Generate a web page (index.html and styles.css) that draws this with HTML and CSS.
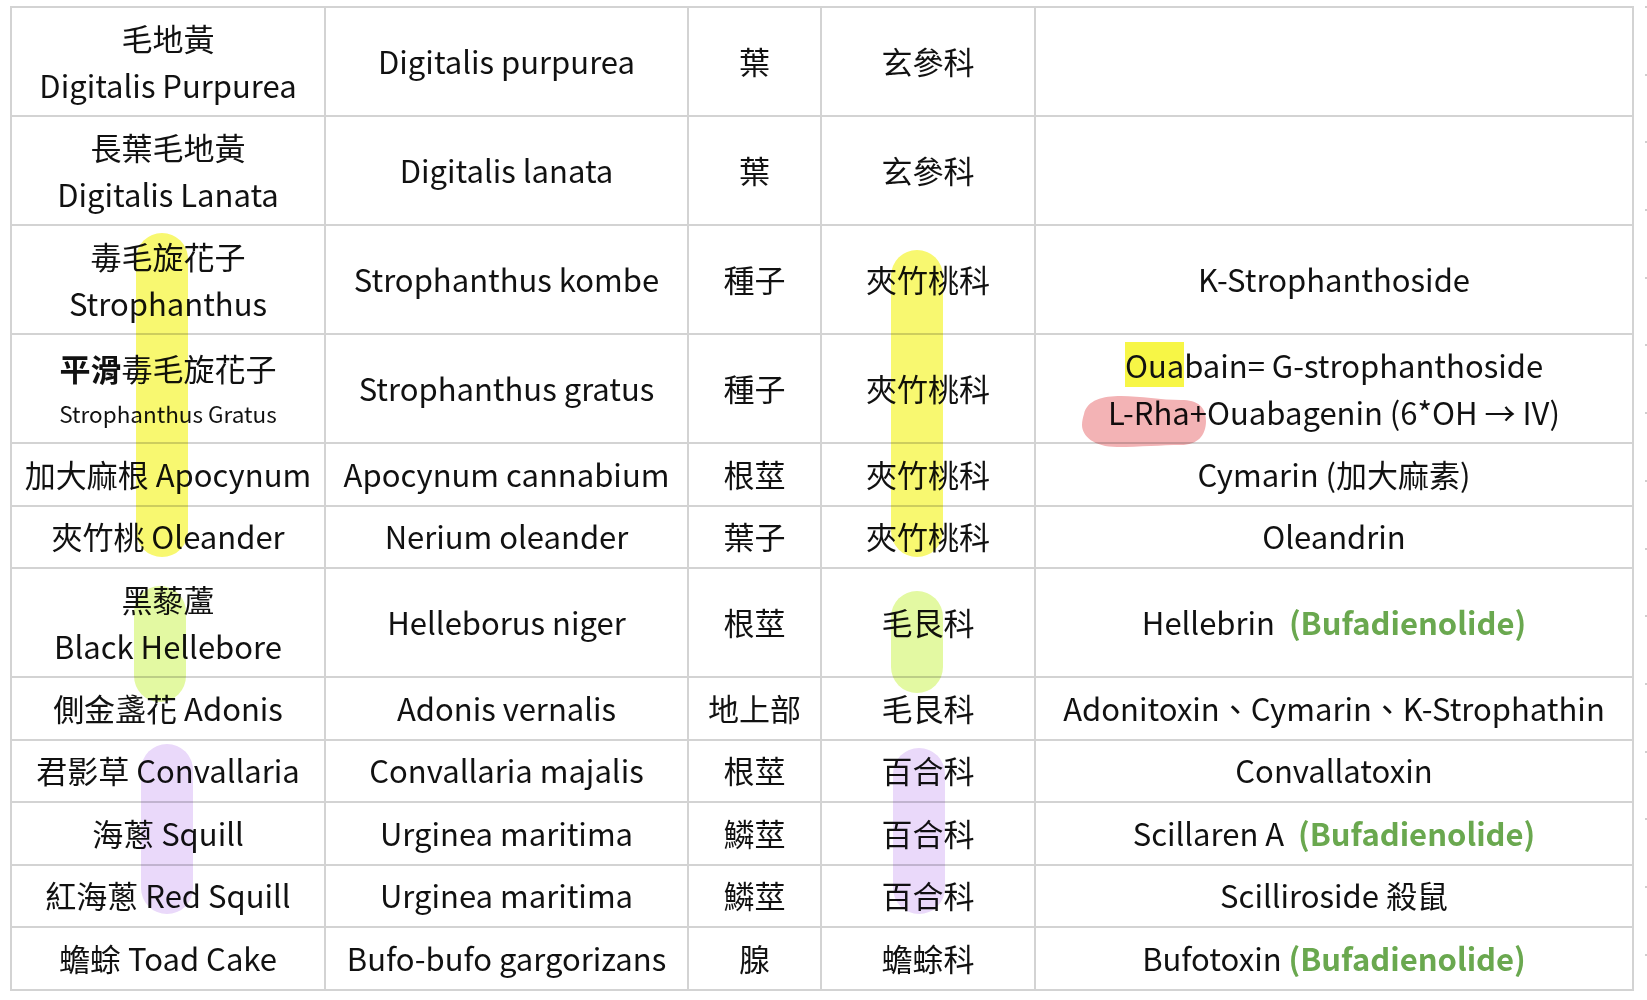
FILE: index.html
```html
<!DOCTYPE html>
<html lang="zh-Hant">
<head>
<meta charset="utf-8">
<link rel="stylesheet" href="styles.css">
</head>
<body>
<div class="page">
  <div class="sheet">
    <table class="grid">
      <colgroup>
        <col class="c1"><col class="c2"><col class="c3"><col class="c4"><col class="c5">
      </colgroup>
      <tr class="tall"><td>毛地黃<br>Digitalis Purpurea</td><td>Digitalis purpurea</td><td>葉</td><td>玄參科</td><td></td></tr>
      <tr class="tall"><td>長葉毛地黃<br>Digitalis Lanata</td><td>Digitalis lanata</td><td>葉</td><td>玄參科</td><td></td></tr>
      <tr class="tall"><td>毒毛旋花子<br>Strophanthus</td><td>Strophanthus kombe</td><td>種子</td><td>夾竹桃科</td><td>K-Strophanthoside</td></tr>
      <tr class="tall"><td class="tight"><b>平滑</b>毒毛旋花子<br><span class="small">Strophanthus Gratus</span></td><td>Strophanthus gratus</td><td>種子</td><td>夾竹桃科</td><td><span class="hl">Oua</span>bain= G-strophanthoside<br>L-Rha+Ouabagenin (6*OH → IV)</td></tr>
      <tr class="short"><td>加大麻根 Apocynum</td><td>Apocynum cannabium</td><td>根莖</td><td>夾竹桃科</td><td>Cymarin (加大麻素)</td></tr>
      <tr class="short"><td>夾竹桃 Oleander</td><td>Nerium oleander</td><td>葉子</td><td>夾竹桃科</td><td>Oleandrin</td></tr>
      <tr class="tall"><td>黑藜蘆<br>Black Hellebore</td><td>Helleborus niger</td><td>根莖</td><td>毛艮科</td><td>Hellebrin&nbsp; <span class="bufa">(Bufadienolide)</span></td></tr>
      <tr class="short"><td>側金盞花 Adonis</td><td>Adonis vernalis</td><td>地上部</td><td>毛艮科</td><td>Adonitoxin、Cymarin、K-Strophathin</td></tr>
      <tr class="short"><td>君影草 Convallaria</td><td>Convallaria majalis</td><td>根莖</td><td>百合科</td><td>Convallatoxin</td></tr>
      <tr class="short"><td>海蔥 Squill</td><td>Urginea maritima</td><td>鱗莖</td><td>百合科</td><td>Scillaren A&nbsp; <span class="bufa">(Bufadienolide)</span></td></tr>
      <tr class="short"><td>紅海蔥 Red Squill</td><td>Urginea maritima</td><td>鱗莖</td><td>百合科</td><td>Scilliroside 殺鼠</td></tr>
      <tr class="short"><td>蟾蜍 Toad Cake</td><td>Bufo-bufo gargorizans</td><td>腺</td><td>蟾蜍科</td><td>Bufotoxin <span class="bufa">(Bufadienolide)</span></td></tr>
    </table>
    <div class="marker m-yellow m-a"></div>
    <div class="marker m-yellow m-b"></div>
    <div class="marker m-green m-c"></div>
    <div class="marker m-green m-d"></div>
    <div class="marker m-purple m-e"></div>
    <div class="marker m-purple m-f"></div>
    <svg class="blob" width="126" height="54" viewBox="0 0 126 54">
      <path d="M3 20 C6 6 22 2 40 2 C60 2 80 6 100 6 C117 6 125 13 125 27 C125 42 116 51 100 51 C80 51 60 53 36 53 C13 53 1 42 1 31 C1 27 2 23 3 20 Z" fill="#f3b3b5"/>
    </svg>
  </div>
  <div class="ruler">
    <i></i><i></i><i></i><i></i><i></i><i></i><i></i><i></i><i></i><i></i><i></i><i></i><i></i><i></i><i></i>
  </div>
</div>
</body>
</html>
```

FILE: styles.css
```css
html, body {
  margin: 0;
  padding: 0;
  background: #ffffff;
}

.page {
  display: flex;
  align-items: flex-start;
  padding: 6px 0 0 10px;
  font-family: "Noto Sans CJK TC", "Noto Sans", sans-serif;
  color: #111111;
}

.sheet {
  position: relative;
}

.grid {
  border-collapse: collapse;
  table-layout: fixed;
  width: 1622px;
  font-size: 31px;
  line-height: 47px;
}

.c1 { width: 314px; }
.c2 { width: 363px; }
.c3 { width: 133px; }
.c4 { width: 214px; }
.c5 { width: 598px; }

.grid td {
  border: 2px solid #d3d3d3;
  text-align: center;
  vertical-align: middle;
  padding: 0 2px 2px;
  white-space: nowrap;
  overflow: visible;
}

.tall { height: 109px; }
.short { height: 62.5px; }

.tight { line-height: 42px; padding-top: 5px !important; }
.tight b { font-weight: 700; }

.small {
  font-size: 22.5px;
}

.hl {
  background: #f7f646;
}

.bufa {
  color: #6aa84f;
  font-weight: 700;
}

.marker {
  position: absolute;
  width: 52px;
  border-radius: 26px;
  mix-blend-mode: multiply;
  pointer-events: none;
}

.m-yellow { background: #f8f870; }
.m-green { background: #e3f9a2; }
.m-purple { background: #ead9fa; }

.m-a { left: 126px; top: 227px; height: 324px; }
.m-b { left: 881px; top: 244px; height: 307px; }
.m-c { left: 124px; top: 580px; height: 116px; }
.m-d { left: 881px; top: 585px; height: 102px; }
.m-e { left: 131px; top: 738px; height: 170px; }
.m-f { left: 883px; top: 742px; height: 166px; }

.blob {
  position: absolute;
  left: 1071px;
  top: 388px;
  mix-blend-mode: multiply;
  pointer-events: none;
}

.ruler {
  display: flex;
  flex-direction: column;
  gap: 65.7px;
  margin-left: 11px;
}

.ruler i {
  display: block;
  width: 4px;
  height: 2px;
  background: #cfcfcf;
}
```
